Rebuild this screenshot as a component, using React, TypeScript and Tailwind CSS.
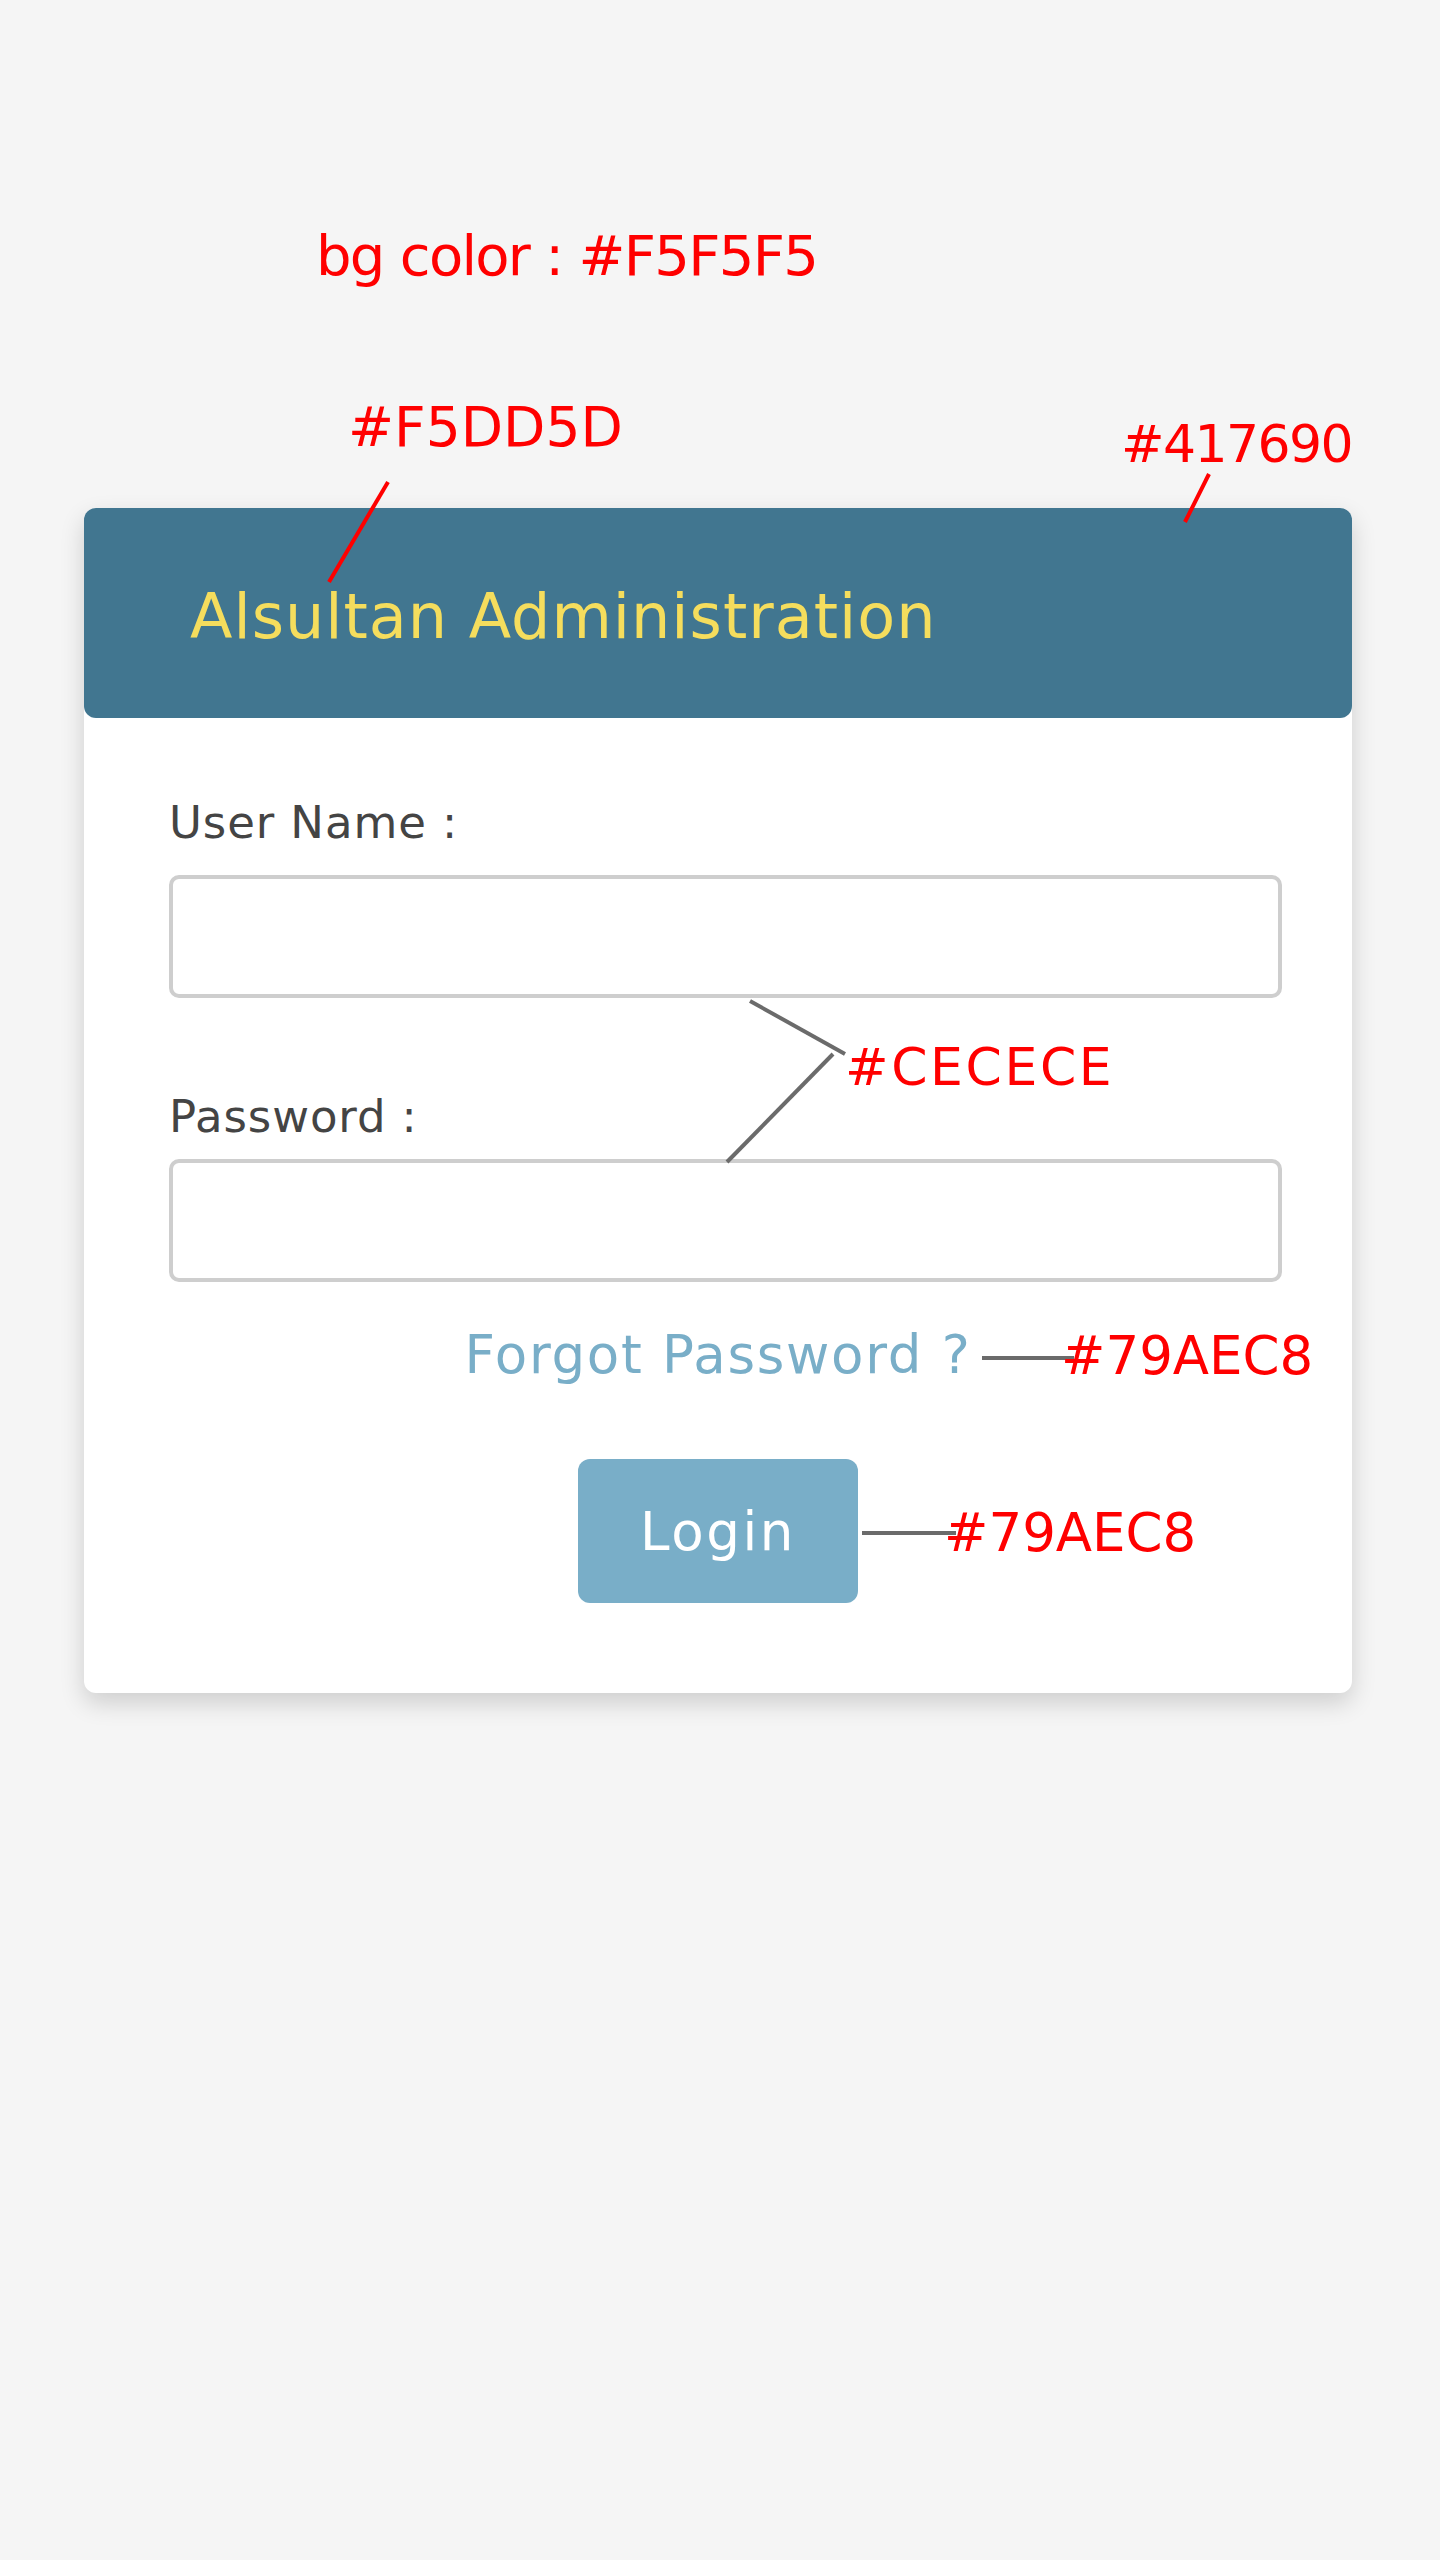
import React from "react";

const font = { fontFamily: "'DejaVu Sans', 'Open Sans', sans-serif" };

const Annotations = () => (
  <div className="pointer-events-none absolute inset-0">
    <svg className="absolute left-0 top-0" width="1440" height="1800">
      <line x1="388" y1="482" x2="329" y2="582" stroke="#ff0000" strokeWidth="4" />
      <line x1="1209" y1="474" x2="1185" y2="522" stroke="#ff0000" strokeWidth="4" />
      <line x1="750" y1="1001" x2="845" y2="1054" stroke="#6b6b6b" strokeWidth="4" />
      <line x1="833" y1="1054" x2="727" y2="1162" stroke="#6b6b6b" strokeWidth="4" />
      <line x1="982" y1="1358" x2="1074" y2="1358" stroke="#6b6b6b" strokeWidth="4" />
      <line x1="862" y1="1533" x2="956" y2="1533" stroke="#6b6b6b" strokeWidth="4" />
    </svg>
    <span className="absolute left-[316px] top-[228px] text-[56px] leading-none tracking-[-1.7px] text-[#ff0000]">bg color : #F5F5F5</span>
    <span className="absolute left-[348px] top-[400px] text-[55px] leading-none text-[#ff0000]">#F5DD5D</span>
    <span className="absolute left-[1121px] top-[418px] text-[52px] leading-none tracking-[-1.6px] text-[#ff0000]">#417690</span>
    <span className="absolute left-[845px] top-[1041px] text-[52px] leading-none tracking-[2.6px] text-[#ff0000]">#CECECE</span>
    <span className="absolute left-[1061px] top-[1329px] text-[53px] leading-none text-[#ff0000]">#79AEC8</span>
    <span className="absolute left-[944px] top-[1506px] text-[53px] leading-none text-[#ff0000]">#79AEC8</span>
  </div>
);

export default function App() {
  return (
    <div className="relative min-h-[2560px] w-full bg-[#F5F5F5] pt-[508px]" style={font}>
      {/* Login card */}
      <div className="ml-[84px] w-[1268px] rounded-xl bg-white shadow-[0_10px_24px_rgba(0,0,0,0.16)]">
        <div className="flex h-[210px] items-center rounded-xl bg-[#417690] pl-[106px] pt-[8px]">
          <h1 className="text-[62px] font-normal leading-none tracking-[1px] text-[#F5DD5D]">Alsultan Administration</h1>
        </div>

        <form className="flex flex-col pb-[90px] pt-[82px]">
          <label className="ml-[85px] text-[45px] leading-none tracking-[0.9px] text-[#444444]">User Name :</label>
          <input
            type="text"
            className="ml-[85px] mt-[30px] h-[123px] w-[1113px] rounded-[10px] border-4 border-[#CECECE] bg-white outline-none"
          />
          <label className="ml-[85px] mt-[96px] text-[45px] leading-none tracking-[0.9px] text-[#444444]">Password :</label>
          <input
            type="password"
            className="ml-[85px] mt-[20px] h-[123px] w-[1113px] rounded-[10px] border-4 border-[#CECECE] bg-white outline-none"
          />
          <a className="mt-[46px] self-center text-[53px] leading-none tracking-[1.7px] text-[#79AEC8]">Forgot Password ?</a>
          <button
            type="button"
            className="mt-[78px] flex h-[144px] w-[280px] items-center justify-center self-center rounded-xl bg-[#79AEC8] text-[53px] leading-none tracking-[2.6px] text-white"
          >
            Login
          </button>
        </form>
      </div>

      <Annotations />
    </div>
  );
}
